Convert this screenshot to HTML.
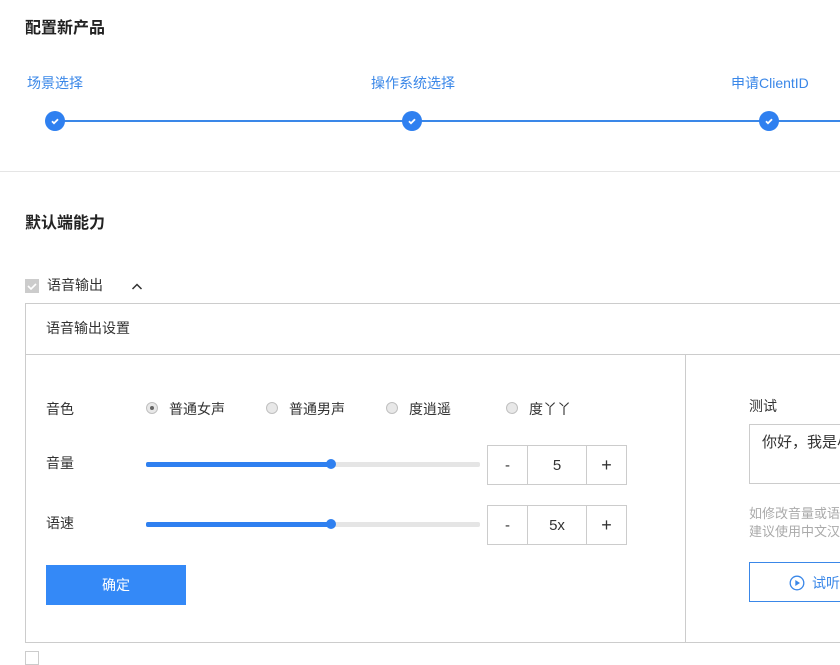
<!DOCTYPE html>
<html><head><meta charset="utf-8"><style>
*{margin:0;padding:0;box-sizing:border-box}
body{width:840px;height:654px;overflow:hidden;background:#fff;font-family:"Liberation Sans","Noto Sans CJK SC","Microsoft YaHei",sans-serif;color:#333;position:relative}
.a{position:absolute;white-space:nowrap}
.t{font-size:16px;font-weight:bold;color:#222}
.s{font-size:14px;color:#3a87e8}
.dot{position:absolute;width:20px;height:20px;border-radius:50%;background:#2f80f0;top:111px}
.dot svg{position:absolute;left:4px;top:4px}
.f{font-size:14px;color:#333}
.radio{position:absolute;width:12px;height:12px;border-radius:50%;border:1px solid #c0c0c0;background:#e8e8e8;top:402px}
.box{position:absolute;border:1px solid #ccc;height:40px;width:140px;display:flex}
.box div{height:100%;display:flex;align-items:center;justify-content:center;font-size:15px;color:#333}
</style></head><body>
<div class="a t" style="left:25px;top:14px">配置新产品</div>
<div class="a s" style="left:27px;top:73px">场景选择</div>
<div class="a s" style="left:371px;top:73px">操作系统选择</div>
<div class="a s" style="left:731px;top:73px">申请ClientID</div>
<div class="a" style="left:55px;top:120px;width:785px;height:2px;background:#3a87e8"></div>
<div class="dot" style="left:45px"><svg width="12" height="12" viewBox="0 0 12 12"><path d="M3 6.2l2 2 4-4" stroke="#fff" stroke-width="1.8" fill="none"/></svg></div>
<div class="dot" style="left:402px"><svg width="12" height="12" viewBox="0 0 12 12"><path d="M3 6.2l2 2 4-4" stroke="#fff" stroke-width="1.8" fill="none"/></svg></div>
<div class="dot" style="left:759px"><svg width="12" height="12" viewBox="0 0 12 12"><path d="M3 6.2l2 2 4-4" stroke="#fff" stroke-width="1.8" fill="none"/></svg></div>
<div class="a" style="left:0;top:171px;width:840px;height:1px;background:#e5e5e5"></div>
<div class="a t" style="left:25px;top:209px">默认端能力</div>
<div class="a" style="left:25px;top:279px;width:14px;height:14px;background:#ccc"><svg width="14" height="14" viewBox="0 0 14 14"><path d="M3 7l3 3 5-5" stroke="#fff" stroke-width="1.6" fill="none"/></svg></div>
<div class="a f" style="left:47px;top:275px">语音输出</div>
<svg class="a" style="left:131px;top:282px" width="12" height="8" viewBox="0 0 12 8"><path d="M1.5 7L6 2.5 10.5 7" stroke="#333" stroke-width="1.5" fill="none"/></svg>
<div class="a" style="left:25px;top:303px;width:830px;height:340px;border:1px solid #ccc"></div>
<div class="a" style="left:25px;top:354px;width:830px;height:1px;background:#ccc"></div>
<div class="a" style="left:685px;top:354px;width:1px;height:288px;background:#ccc"></div>
<div class="a f" style="left:46px;top:318px">语音输出设置</div>
<div class="a f" style="left:46px;top:399px">音色</div>
<div class="radio" style="left:146px"><div style="position:absolute;left:3px;top:3px;width:4px;height:4px;border-radius:50%;background:#666"></div></div>
<div class="a f" style="left:169px;top:399px">普通女声</div>
<div class="radio" style="left:266px"></div>
<div class="a f" style="left:289px;top:399px">普通男声</div>
<div class="radio" style="left:386px"></div>
<div class="a f" style="left:409px;top:399px">度逍遥</div>
<div class="radio" style="left:506px"></div>
<div class="a f" style="left:529px;top:399px">度丫丫</div>
<div class="a f" style="left:46px;top:453px">音量</div>
<div class="a" style="left:146px;top:462px;width:334px;height:5px;background:#e5e5e5;border-radius:2px"></div>
<div class="a" style="left:146px;top:462px;width:185px;height:5px;background:#2f80f0;border-radius:2px"></div>
<div class="a" style="left:326px;top:459px;width:10px;height:10px;border-radius:50%;background:#2f80f0"></div>
<div class="box" style="left:487px;top:445px"><div style="width:40px;border-right:1px solid #ccc">-</div><div style="width:59px;border-right:1px solid #ccc">5</div><div style="width:39px;font-size:18px">+</div></div>
<div class="a f" style="left:46px;top:513px">语速</div>
<div class="a" style="left:146px;top:522px;width:334px;height:5px;background:#e5e5e5;border-radius:2px"></div>
<div class="a" style="left:146px;top:522px;width:185px;height:5px;background:#2f80f0;border-radius:2px"></div>
<div class="a" style="left:326px;top:519px;width:10px;height:10px;border-radius:50%;background:#2f80f0"></div>
<div class="box" style="left:487px;top:505px"><div style="width:40px;border-right:1px solid #ccc">-</div><div style="width:59px;border-right:1px solid #ccc">5x</div><div style="width:39px;font-size:18px">+</div></div>
<div class="a" style="left:46px;top:565px;width:140px;height:40px;background:#3489f7;color:#fff;font-size:14px;display:flex;align-items:center;justify-content:center">确定</div>
<div class="a f" style="left:749px;top:396px">测试</div>
<div class="a" style="left:749px;top:424px;width:110px;height:60px;border:1px solid #ccc"></div>
<div class="a f" style="left:762px;top:431px;font-size:15px">你好，我是小度</div>
<div class="a" style="left:749px;top:505px;font-size:13px;color:#aaa;line-height:18px">如修改音量或语速<br>建议使用中文汉字</div>
<div class="a" style="left:749px;top:562px;width:110px;height:40px;border:1px solid #3a87e8"></div>
<svg class="a" style="left:789px;top:575px" width="16" height="16" viewBox="0 0 16 16"><circle cx="8" cy="8" r="6.8" stroke="#3a87e8" stroke-width="1.3" fill="none"/><path d="M6.3 5v6l4.7-3z" fill="#3a87e8"/></svg>
<div class="a" style="left:812px;top:573px;font-size:14px;color:#3a87e8">试听</div>
<div class="a" style="left:25px;top:651px;width:14px;height:14px;border:1px solid #ccc"></div>
</body></html>
